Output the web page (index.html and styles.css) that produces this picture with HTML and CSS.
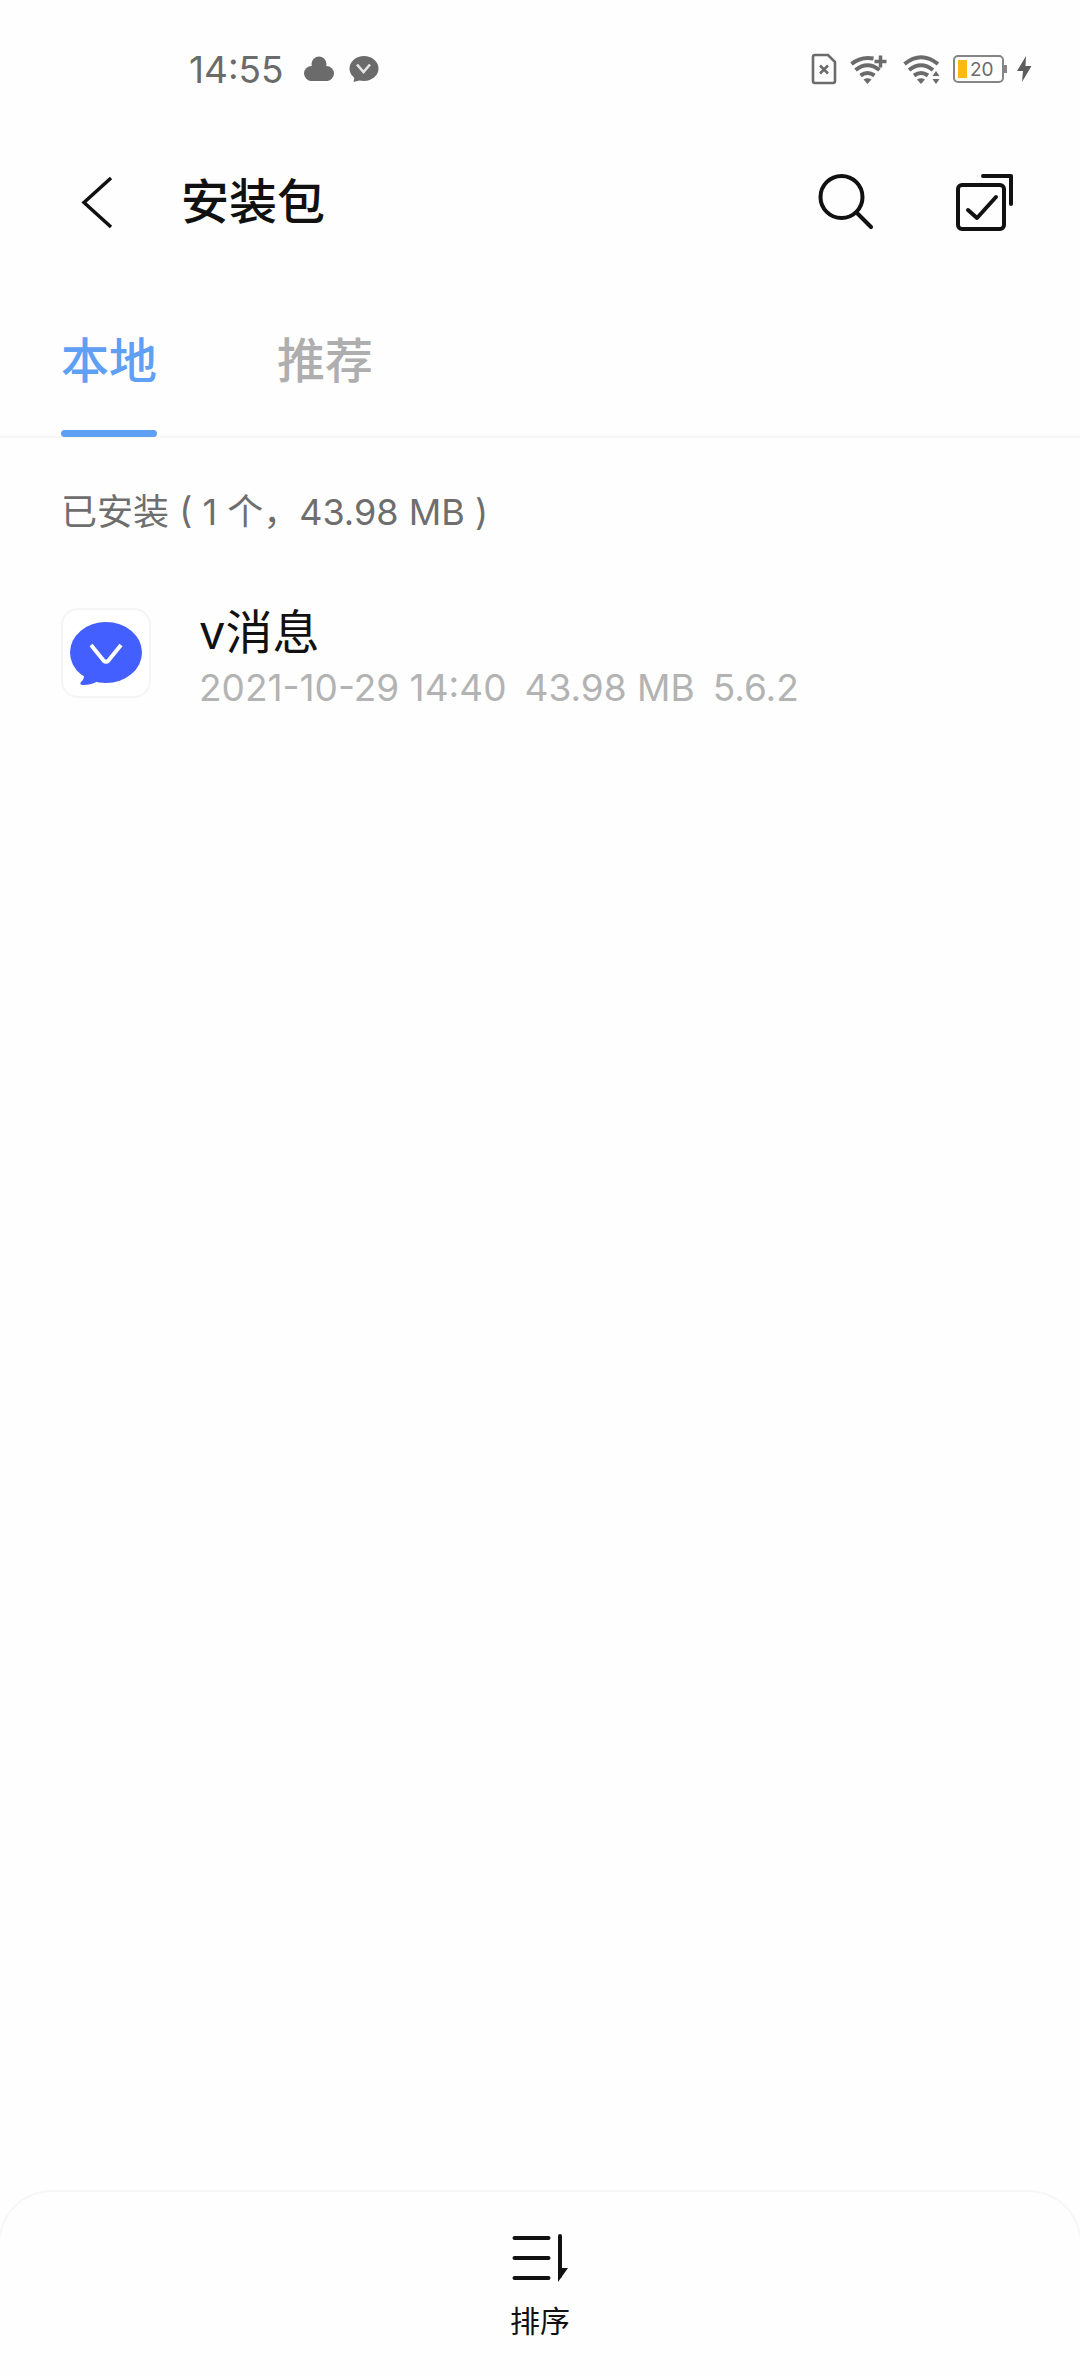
FILE: index.html
```html
<!DOCTYPE html>
<html lang="zh-CN">
<head>
<meta charset="utf-8">
<meta name="viewport" content="width=device-width, initial-scale=1">
<title>安装包</title>
<link rel="stylesheet" href="styles.css">
</head>
<body>
<div class="status">
  <div class="status-left">
    <span class="clock">14:55</span>
    <svg width="30" height="26" viewBox="0 0 30 26" fill="#6b6b6b" aria-hidden="true"><circle cx="15" cy="8" r="7.500"/><circle cx="7.500" cy="17.500" r="7.500"/><circle cx="22.500" cy="17.500" r="7.500"/><path d="M8 9H22L24 25H6Z"/></svg>
    <svg width="30" height="28" viewBox="0 0 30 28" aria-hidden="true"><ellipse cx="15" cy="13.500" rx="14.500" ry="12.500" fill="#6b6b6b"/><path d="M6 20L4.500 27L12 25Z" fill="#6b6b6b"/><path d="M8 9.500L14.500 17L21 9.500" fill="none" stroke="#e6e6e6" stroke-width="2.600"/></svg>
  </div>
  <div class="status-right">
    <svg width="26" height="32" viewBox="0 0 26 32" fill="none" stroke="#6b6b6b" aria-hidden="true"><path d="M4 2H17L24 9V28Q24 30 22 30H4Q2 30 2 28V4Q2 2 4 2Z" stroke-width="2.600"/><path d="M9 12.500L17 20.500M17 12.500L9 20.500" stroke-width="2.600"/></svg>
    <svg width="37" height="32" viewBox="0 0 37 32" fill="none" stroke="#6b6b6b" stroke-width="4" aria-hidden="true"><path d="M1.500 11Q11 3 23.500 5.500M5.500 17Q17.500 7.500 29.500 17M10.500 22.500Q17.500 17.500 24.500 22.500"/><path d="M24.500 8.500H36.500M30.500 2.500V14.500" stroke-width="3.500"/><path d="M13.500 26.500Q17.500 24 21.500 26.500L17.500 31Z" fill="#6b6b6b" stroke="none"/></svg>
    <svg class="wifi-data" width="37" height="32" viewBox="0 0 37 32" fill="none" stroke="#6b6b6b" stroke-width="4" aria-hidden="true"><path d="M1.500 11Q18 -2.500 35 11M6 17Q18 7.500 30 17M11 22.500Q18 17.500 25 22.500"/><path d="M14 26.500Q18 24 22 26.500L18 31Z" fill="#6b6b6b" stroke="none"/><path d="M33 18L36.500 23H29.500ZM33 31L36.500 26H29.500Z" fill="#6b6b6b" stroke="none"/></svg>
    <div class="battery"><span class="level"></span><span>20</span></div>
    <svg width="15" height="26" viewBox="0 0 15 26" fill="#5c5c5c" aria-hidden="true"><path d="M9 0L0 15H6L5 26L14.500 10H8.500Z"/></svg>
  </div>
</div>

<header class="header">
  <button class="icon-btn" aria-label="返回"><svg width="56" height="56" viewBox="0 0 56 56" fill="none" stroke="#111" stroke-width="3.500"><path d="M41 4L14 28.500L41 53"/></svg></button>
  <h1>安装包</h1>
  <button class="icon-btn" aria-label="搜索"><svg width="56" height="56" viewBox="0 0 56 56" fill="none" stroke="#111" stroke-width="4" stroke-linecap="round"><circle cx="24.500" cy="23" r="21"/><path d="M39.500 38.500L54 53"/></svg></button>
  <button class="icon-btn" aria-label="多选"><svg width="60" height="60" viewBox="0 0 60 60" fill="none" stroke="#111" stroke-width="4" stroke-linecap="round" stroke-linejoin="round"><rect x="3" y="13" width="46" height="44" rx="4"/><path d="M13 38L22 46L41 25"/><path d="M28 4H56V32"/></svg></button>
</header>

<nav class="tabs">
  <a class="tab active" href="#local" aria-current="page">本地</a>
  <a class="tab" href="#recommend">推荐</a>
</nav>

<main class="content" id="local">
  <h2>已安装 ( 1 个，43.98 MB )</h2>
  <ul class="list">
    <li class="item">
      <svg class="app-icon" viewBox="0 0 90 90" aria-hidden="true"><rect x="1" y="1" width="88" height="88" rx="16" fill="#fff" stroke="#f5f5f5" stroke-width="2"/><ellipse cx="45" cy="44.500" rx="36" ry="30.500" fill="#435fff"/><path d="M24 64Q23 72 20 74Q18 77 22 77Q31 77 37 73Z" fill="#435fff"/><path d="M30 37L42.500 52.500Q45 55 47.500 52.500L60 37" fill="none" stroke="#fff" stroke-width="4"/></svg>
      <div class="info">
        <div class="name">v消息</div>
        <div class="meta"><span>2021-10-29 14:40</span><span>43.98 MB</span><span>5.6.2</span></div>
      </div>
    </li>
  </ul>
</main>

<footer class="toolbar">
  <button class="sort"><svg width="56" height="48" viewBox="0 0 56 48" aria-hidden="true"><path d="M2.500 4H36.500M2.500 24H36.500M2.500 44H36.500M48 2V42" fill="none" stroke="#111" stroke-width="4" stroke-linecap="round"/><path d="M46 34H56L46 48Z" fill="#111"/></svg>排序</button>
</footer>
</body>
</html>
```
FILE: styles.css
```css
* { box-sizing: border-box; }
body {
  margin: 0;
  min-height: 100vh;
  display: flex;
  flex-direction: column;
  overflow-x: hidden;
  background: #fefefe;
  color: #111;
  font-family: Inter, "Noto Sans CJK SC", sans-serif;
}
button { padding: 0; border: 0; background: none; font: inherit; color: inherit; }
svg { display: block; flex: none; }
h1, h2, ul { margin: 0; padding: 0; }

.status {
  display: flex;
  justify-content: space-between;
  align-items: center;
  padding: 46px 48px 0 189px;
  height: 92px;
  color: #6b6b6b;
}
.status-left, .status-right { display: flex; align-items: center; }
.status-left { gap: 15px; }
.clock { font-size: 37px; margin-right: 5px; }
.status-right { gap: 13px; }
.wifi-data { margin-left: 3px; }
.battery {
  position: relative;
  display: flex;
  align-items: center;
  gap: 3px;
  width: 51px;
  height: 28px;
  padding-left: 3px;
  border: 2px solid #858585;
  border-radius: 5px;
  font-size: 19px;
}
.battery::after {
  content: "";
  position: absolute;
  right: -5px;
  top: 8px;
  width: 3px;
  height: 8px;
  background: #858585;
}
.level { width: 9px; height: 18px; background: #fdb913; }

.header {
  display: flex;
  align-items: center;
  height: 220px;
  padding: 0 65px 0 70px;
}
.header h1 { flex: 1; margin-left: 55px; font-size: 48px; font-weight: 500; line-height: 64px; }
.icon-btn + .icon-btn { margin-left: 82px; }

.tabs {
  display: flex;
  gap: 120px;
  height: 126px;
  padding: 0 61px;
  border-bottom: 2px solid #f6f6f6;
}
.tab {
  height: 125px;
  padding-top: 14px;
  color: #aeaeae;
  font-size: 48px;
  font-weight: 500;
  line-height: 70px;
  text-decoration: none;
}
.tab.active { position: relative; color: #5f9ff4; }
.tab.active::after {
  content: "";
  position: absolute;
  left: 0;
  right: 0;
  bottom: 0;
  height: 7px;
  border-radius: 4px;
  background: #5f9ff4;
}

.content { flex: 1; padding: 48px 61px; }
.content h2 { color: #6e6e6e; font-size: 36px; font-weight: 400; line-height: 52px; }
.list { list-style: none; margin-top: 64px; }
.item { display: flex; align-items: flex-start; gap: 48px; }
.app-icon { width: 90px; height: 90px; margin-top: 6px; }
.name { font-size: 47px; line-height: 60px; }
.meta { display: flex; flex-wrap: wrap; gap: 18px; color: #b3b3b3; font-size: 37px; line-height: 52px; }

.toolbar {
  display: flex;
  justify-content: center;
  margin: 0 -2px;
  padding: 42px 0 34px;
  border: 2px solid #f7f7f7;
  border-bottom: 0;
  border-radius: 54px 54px 0 0;
}
.sort { display: flex; flex-direction: column; align-items: center; gap: 18px; font-size: 30px; line-height: 42px; }
```
